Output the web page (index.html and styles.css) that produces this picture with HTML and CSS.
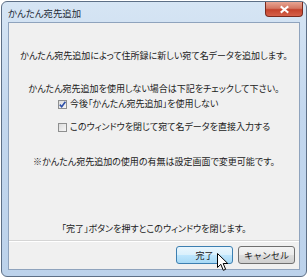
FILE: index.html
```html
<!DOCTYPE html>
<html lang="ja">
<head>
  <meta charset="UTF-8">
  <title>かんたん宛先追加</title>
  <link rel="stylesheet" href="styles.css">
</head>
<body>
  <div class="window">
    <div class="titlebar">
      <span class="title">かんたん宛先追加</span>
      <button class="close-btn">
        <svg width="11" height="9" viewBox="0 0 11 9">
          <path d="M2.5 2 L8.5 7 M8.5 2 L2.5 7" stroke="#fff" stroke-width="2" stroke-linecap="square"/>
        </svg>
      </button>
    </div>

    <div class="client">
      <p class="msg first">かんたん宛先追加によって住所録に新しい宛て名データを追加します。</p>
      <p class="msg second">かんたん宛先追加を使用しない場合は下記をチェックして下さい。</p>

      <div class="options">
        <label class="check-row">
          <span class="checkbox checked">
            <svg width="9" height="9" viewBox="0 0 9 9">
              <path d="M1.8 4.6 L3.7 6.7 L7.4 1.8" fill="none" stroke="#2c4fa8" stroke-width="1.6"/>
            </svg>
          </span>
          今後「かんたん宛先追加」を使用しない
        </label>
        <label class="check-row">
          <span class="checkbox"></span>
          このウィンドウを閉じて宛て名データを直接入力する
        </label>
      </div>

      <p class="msg note">※かんたん宛先追加の使用の有無は設定画面で変更可能です。</p>

      <p class="msg closing">「完了」ボタンを押すとこのウィンドウを閉じます。</p>

      <div class="footer">
        <button class="btn default">完了</button>
        <button class="btn">キャンセル</button>
        <svg class="cursor" width="12" height="19" viewBox="0 0 12 19">
          <path d="M0.5 0.5 L0.5 14.5 L3.8 11.3 L6.3 17.3 L8.6 16.3 L6.2 10.5 L10.8 10.5 Z" fill="#fff" stroke="#000" stroke-width="1"/>
        </svg>
      </div>
    </div>
  </div>
</body>
</html>
```

FILE: styles.css
```css
body {
  margin: 0;
  background: #ffffff;
  font-family: "Noto Sans CJK JP", "Noto Sans", sans-serif;
  font-feature-settings: "palt";
  color: #1a1a1a;
}

.window {
  width: 292px;
  height: 268px;
  margin: 1px;
  padding: 0 6px 6px 6px;
  border: 1px solid #5d6f86;
  border-radius: 6px;
  background: linear-gradient(to bottom, #d6e5f4 0%, #c3d7ee 40%, #bcd2eb 100%);
  display: flex;
  flex-direction: column;
}

.titlebar {
  height: 20px;
  display: flex;
  align-items: flex-start;
}

.title {
  font-size: 9.4px;
  line-height: 10px;
  margin-top: 6px;
  color: #1e2a36;
}

.close-btn {
  margin-left: auto;
  margin-right: -3px;
  width: 38px;
  height: 15px;
  padding: 0;
  border: 1px solid #7a2a1e;
  border-top: none;
  border-radius: 0 0 4px 4px;
  background: linear-gradient(to bottom, #e8a593 0%, #d47763 45%, #c4432d 55%, #d5614a 100%);
  display: flex;
  align-items: center;
  justify-content: center;
}

.client {
  flex: 1;
  background: #f0f0f0;
  border: 1px solid #8fa3bd;
  display: flex;
  flex-direction: column;
  position: relative;
}

.msg {
  margin: 0;
  font-size: 9px;
  line-height: 12px;
  text-align: center;
  white-space: nowrap;
}

.first {
  margin-top: 27px;
}

.second {
  margin-top: 21px;
}

.options {
  margin-top: 3px;
  padding-left: 49px;
  display: flex;
  flex-direction: column;
  gap: 11px;
}

.check-row {
  display: flex;
  align-items: center;
  gap: 3px;
  font-size: 9px;
  line-height: 12px;
  white-space: nowrap;
}

.checkbox {
  width: 9px;
  height: 9px;
  box-sizing: border-box;
  border: 1px solid #8e8f8f;
  background: linear-gradient(135deg, #dcdcdc, #f6f6f6);
  display: flex;
}

.checkbox svg {
  margin: -1px;
}

.note {
  margin-top: 23px;
}

.closing {
  margin-top: auto;
  padding-bottom: 5px;
  border-bottom: 1px solid #d5d5d5;
  margin-bottom: 0;
}

.footer {
  display: flex;
  justify-content: flex-end;
  gap: 5px;
  padding: 4px 4px 5px 0;
  border-top: 1px solid #ffffff;
  position: relative;
}

.btn {
  width: 57px;
  height: 18px;
  padding: 0;
  font-family: inherit;
  font-size: 9px;
  color: #1a1a1a;
  border: 1px solid #707070;
  border-radius: 3px;
  background: linear-gradient(to bottom, #f3f3f3 0%, #ebebeb 49%, #dddddd 51%, #cfcfcf 100%);
}

.btn.default {
  border-color: #3c7fb1;
  background: linear-gradient(to bottom, #eaf6fd 0%, #d9f0fc 49%, #bee6fd 51%, #a7d9f5 100%);
}

.cursor {
  position: absolute;
  left: 208px;
  top: 11px;
}
```
